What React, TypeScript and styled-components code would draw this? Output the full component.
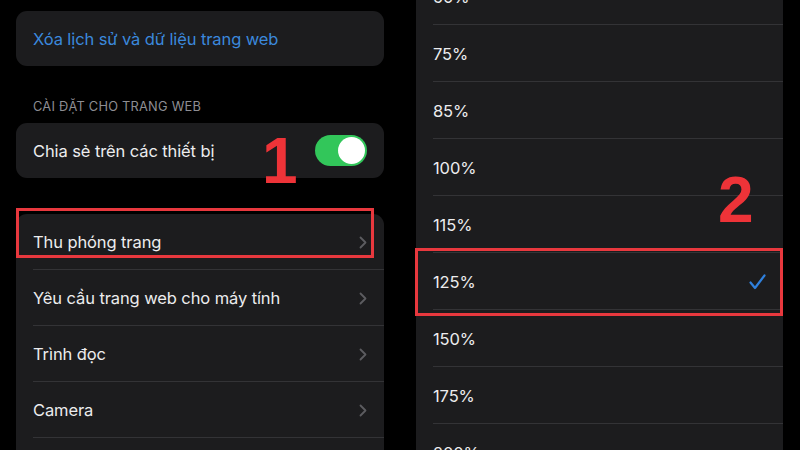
import React from 'react';
import styled, { createGlobalStyle } from 'styled-components';

const GlobalStyle = createGlobalStyle`
  html, body {
    margin: 0;
    padding: 0;
    background: #000;
    overflow: hidden;
  }
  body {
    font-family: Inter, "Noto Sans", "Liberation Sans", sans-serif;
    -webkit-font-smoothing: antialiased;
  }
`;

const Page = styled.div`
  width: 800px;
  height: 450px;
  display: grid;
  grid-template-columns: 368px 367px;
  column-gap: 32px;
  padding: 0 17px 0 16px;
  box-sizing: border-box;
  overflow: hidden;
  position: relative;
`;

const Column = styled.div`
  display: flex;
  flex-direction: column;
  height: 450px;
  position: relative;
`;

const LeftColumn = styled(Column)`
  padding-top: 11px;
  box-sizing: border-box;
`;

const Card = styled.div<{ $open?: boolean; $gap?: number }>`
  background: #1c1c1e;
  border-radius: ${(p) => (p.$open ? '11px 11px 0 0' : '11px')};
  margin-top: ${(p) => p.$gap ?? 0}px;
  display: flex;
  flex-direction: column;
  flex-shrink: 0;
`;

const SectionHeader = styled.div`
  margin: 33px 0 8px 17px;
  font-size: 12.8px;
  line-height: 16px;
  color: #8e8e93;
  letter-spacing: 0.25px;
`;

const Row = styled.div<{ $height: number }>`
  position: relative;
  height: ${(p) => p.$height}px;
  display: flex;
  align-items: center;
  padding: 0 17px;
  flex-shrink: 0;
  &:not(:last-child)::after {
    content: '';
    position: absolute;
    left: 17px;
    right: 0;
    bottom: 0;
    height: 1px;
    background: #333336;
  }
`;

const Label = styled.span<{ $tone?: 'link' | 'plain' }>`
  flex: 1;
  font-size: 16.5px;
  color: ${(p) => (p.$tone === 'link' ? '#3b88dc' : '#ececee')};
  white-space: nowrap;
  letter-spacing: -0.1px;
`;

const Toggle = styled.div`
  width: 52px;
  height: 31px;
  border-radius: 16px;
  background: #32c65a;
  display: flex;
  align-items: center;
  justify-content: flex-end;
  padding: 0 2px;
  box-sizing: border-box;
`;

const Knob = styled.div`
  width: 27px;
  height: 27px;
  border-radius: 50%;
  background: #fff;
`;

const Highlight = styled.div<{ $top: number; $bottom: number; $left: number; $right: number }>`
  position: absolute;
  top: ${(p) => p.$top}px;
  bottom: ${(p) => p.$bottom}px;
  left: ${(p) => p.$left}px;
  right: ${(p) => p.$right}px;
  border: 3px solid #e8383e;
  pointer-events: none;
  z-index: 2;
`;

const StepNumber = styled.div<{ $x: number; $y: number }>`
  position: absolute;
  left: ${(p) => p.$x}px;
  top: ${(p) => p.$y}px;
  font-family: "Liberation Sans", Arial, sans-serif;
  font-weight: 700;
  font-size: 64px;
  line-height: 64px;
  color: #ee3338;
  z-index: 3;
`;

const RightCard = styled(Card)`
  margin-top: -32px;
  border-radius: 0;
`;

const Chevron = () => (
  <svg width="8" height="13" viewBox="0 0 8 13" fill="none">
    <path d="M1.5 1.5L6.5 6.5L1.5 11.5" stroke="#5c5c60" strokeWidth="1.8" strokeLinecap="round" strokeLinejoin="round" />
  </svg>
);

const Check = () => (
  <svg width="17" height="16" viewBox="0 0 17 16" fill="none">
    <path d="M1.5 8.5L6 14L15.5 1.5" stroke="#2f80dd" strokeWidth="2.2" strokeLinecap="round" strokeLinejoin="round" />
  </svg>
);

const siteSettings = ['Thu phóng trang', 'Yêu cầu trang web cho máy tính', 'Trình đọc', 'Camera'];
const zoomLevels = ['50%', '75%', '85%', '100%', '115%', '125%', '150%', '175%', '200%'];
const selectedZoom = '125%';

export default function App() {
  return (
    <>
      <GlobalStyle />
      <Page>
        <LeftColumn>
          <Card>
            <Row $height={55}>
              <Label $tone="link">Xóa lịch sử và dữ liệu trang web</Label>
            </Row>
          </Card>

          <SectionHeader>CÀI ĐẶT CHO TRANG WEB</SectionHeader>
          <Card>
            <Row $height={55}>
              <Label>Chia sẻ trên các thiết bị</Label>
              <Toggle>
                <Knob />
              </Toggle>
            </Row>
          </Card>

          <Card $open $gap={36}>
            {siteSettings.map((item, i) => (
              <Row key={item} $height={56}>
                <Label>{item}</Label>
                <Chevron />
                {i === 0 && <Highlight $top={-6} $bottom={12} $left={0} $right={10} />}
              </Row>
            ))}
            <Row $height={56} />
          </Card>

          <StepNumber $x={246} $y={129}>1</StepNumber>
        </LeftColumn>

        <Column>
          <RightCard>
            {zoomLevels.map((level) => (
              <Row key={level} $height={57}>
                <Label>{level}</Label>
                {level === selectedZoom && (
                  <>
                    <Check />
                    <Highlight $top={-5} $bottom={-6} $left={-1} $right={0} />
                  </>
                )}
              </Row>
            ))}
          </RightCard>
          <StepNumber $x={302} $y={168}>2</StepNumber>
        </Column>
      </Page>
    </>
  );
}
